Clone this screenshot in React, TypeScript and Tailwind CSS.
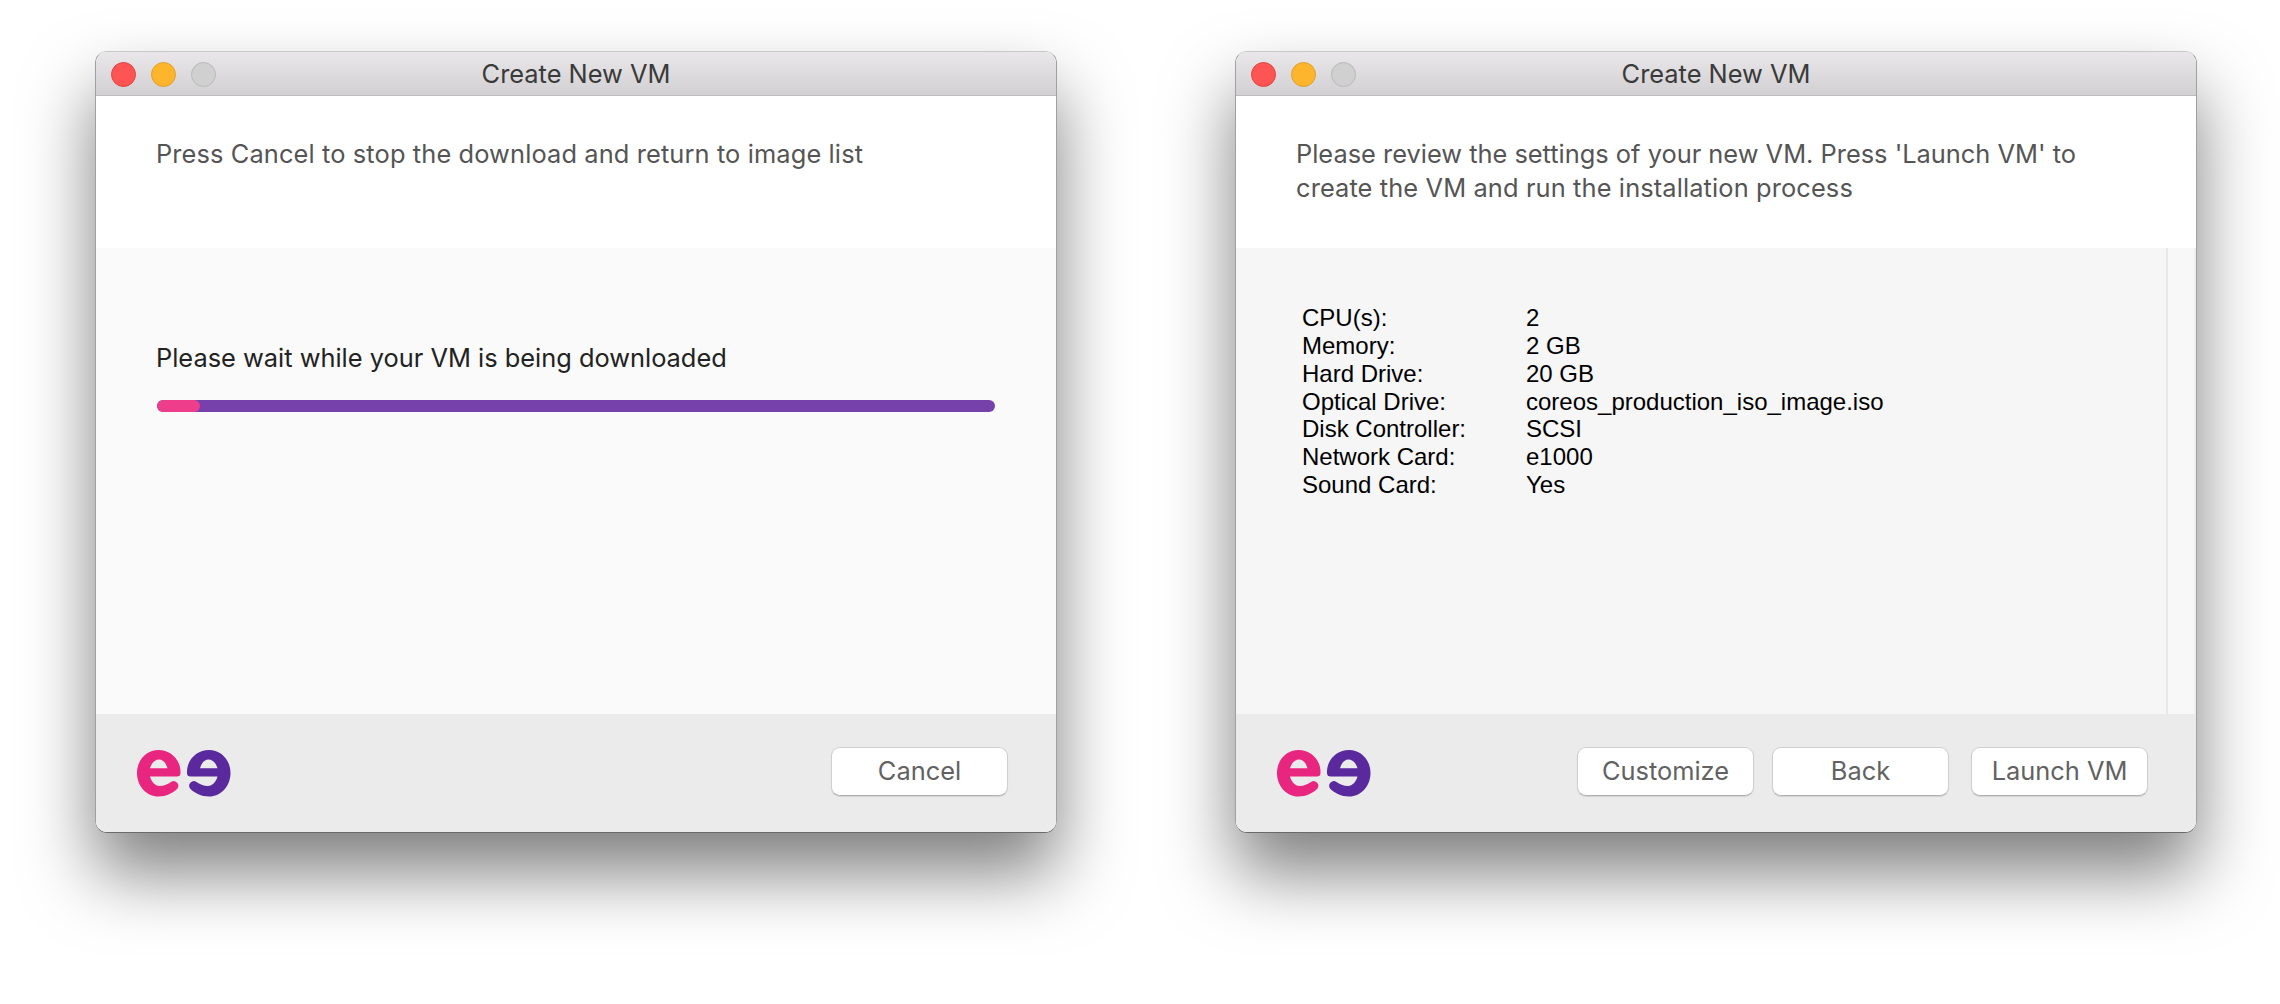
import React from "react";

function Logo() {
  const d =
    "M21.5 0C33.5 0 43.5 9.5 43.5 22V23Q43.5 26.6 39.7 26.6H13C14.5 32 18 36 22.5 36C27 36 31 34 34 32A4.7 4.7 0 0 1 40.5 38.5C36 43 29 46.5 21.5 46.5C9.5 46.5 0 36 0 23C0 10 9.5 0 21.5 0ZM13 18.3H30.5C29 13 26 9.5 22 9.5C18 9.5 14.5 13 13 18.3Z";
  return (
    <svg className="mt-[4px]" width="94" height="47" viewBox="0 0 94 47" aria-hidden="true">
      <path d={d} fill="#e9267f" fillRule="evenodd" />
      <path d={d} transform="translate(93.5 0) scale(-1 1)" fill="#5a299e" fillRule="evenodd" />
    </svg>
  );
}

function TitleBar() {
  return (
    <div className="relative flex h-[44px] shrink-0 items-center justify-center border-b border-[#bdbbbd] bg-gradient-to-b from-[#e9e7e9] to-[#d2d0d2]">
      <div className="absolute left-[15px] top-[10px] flex gap-[15px]">
        <span className="size-[25px] rounded-full border border-[#e2443f] bg-[#fe5453]" />
        <span className="size-[25px] rounded-full border border-[#e0a028] bg-[#fdb52e]" />
        <span className="size-[25px] rounded-full border border-[#b9b9b9] bg-[#d0d0d0]" />
      </div>
      <span className="pt-[2px] text-[25.4px] text-[#3a3a3a]">Create New VM</span>
    </div>
  );
}

function Btn({ children, extra }: { children: React.ReactNode; extra?: string }) {
  return (
    <button className={`flex h-[49px] w-[177px] items-center justify-center rounded-[9px] border border-[#cfcfcf] border-b-[#b0b0b0] bg-white text-[25.4px] text-[#626262] shadow-[0_1px_1px_rgba(0,0,0,0.1)] ${extra ?? ""}`}>
      {children}
    </button>
  );
}

function Window({ children }: { children: React.ReactNode }) {
  return (
    <div className="flex h-[782px] w-[962px] shrink-0 flex-col overflow-hidden rounded-[12px] border border-[#a0a0a0] border-b-[#6a6a6a] border-t-[#c8c8c8] shadow-[0_40px_70px_rgba(0,0,0,0.5)]">
      <TitleBar />
      {children}
    </div>
  );
}

function Footer({ children }: { children: React.ReactNode }) {
  return (
    <div className="flex h-[118px] shrink-0 items-center justify-between bg-[#ebebeb] pb-[3px] pl-[41px] pr-[48px]">
      <Logo />
      <div className="flex gap-[18px]">{children}</div>
    </div>
  );
}

const rows = [
  ["CPU(s):", "2"],
  ["Memory:", "2 GB"],
  ["Hard Drive:", "20 GB"],
  ["Optical Drive:", "coreos_production_iso_image.iso"],
  ["Disk Controller:", "SCSI"],
  ["Network Card:", "e1000"],
  ["Sound Card:", "Yes"],
];

export default function App() {
  return (
    <div className="flex h-[1004px] w-[2280px] gap-[178px] overflow-hidden bg-white pl-[95px] pt-[51px] font-['Inter',sans-serif]">
      <Window>
        <div className="h-[152px] shrink-0 bg-white pl-[60px] pt-[41px] text-[25.4px] leading-[34px] tracking-[0.12px] text-[#555555]">
          Press Cancel to stop the download and return to image list
        </div>
        <div className="flex min-h-0 flex-1 flex-col bg-[#fafafa] pl-[60px] pr-[61px] pt-[93px]">
          <div className="text-[25.4px] leading-[34px] text-[#222222]">Please wait while your VM is being downloaded</div>
          <div className="ml-[1px] mt-[25px] h-[12px] overflow-hidden rounded-full bg-[#7641ab]">
            <div className="h-full w-[43px] rounded-full bg-[#ee3d8b]" />
          </div>
        </div>
        <Footer>
          <Btn>Cancel</Btn>
        </Footer>
      </Window>
      <Window>
        <div className="h-[152px] shrink-0 bg-white pl-[60px] pt-[41px] text-[25.4px] leading-[34px] text-[#555555]">
          Please review the settings of your new VM. Press 'Launch VM' to
          <br />
          <span className="tracking-[0.12px]">create the VM and run the installation process</span>
        </div>
        <div className="flex min-h-0 flex-1 bg-[#f6f6f6]">
          <div className="flex-1 pl-[66px] pt-[56px] font-['Liberation_Sans',sans-serif] text-[24px] leading-[27.85px] text-black">
            {rows.map(([k, v]) => (
              <div key={k} className="flex">
                <div className="w-[224px]">{k}</div>
                <div>{v}</div>
              </div>
            ))}
          </div>
          <div className="w-[30px] border-x-2 border-l-[#e8e8e8] border-r-[#eeeeee] bg-[#f8f8f8]" />
        </div>
        <Footer>
          <Btn>Customize</Btn>
          <Btn>Back</Btn>
          <Btn extra="ml-[4px]">Launch VM</Btn>
        </Footer>
      </Window>
    </div>
  );
}
